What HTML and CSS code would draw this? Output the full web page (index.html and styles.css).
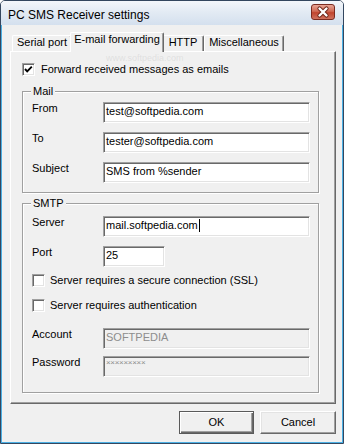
FILE: index.html
```html
<!DOCTYPE html>
<html>
<head>
<meta charset="utf-8">
<link rel="stylesheet" href="styles.css">
</head>
<body>
<div class="window">
  <div class="titlebar">
    <span class="title">PC SMS Receiver settings</span>
    <div class="close">
      <svg width="22" height="14" viewBox="0 0 22 14">
        <path d="M7.5 3.5 L14.5 10.5 M14.5 3.5 L7.5 10.5" stroke="#6b2418" stroke-width="4.2" stroke-linecap="round" fill="none"/>
        <path d="M7.5 3.5 L14.5 10.5 M14.5 3.5 L7.5 10.5" stroke="#ffffff" stroke-width="2.4" stroke-linecap="round" fill="none"/>
      </svg>
    </div>
  </div>
  <div class="frame">
    <div class="tabs">
      <div class="tab t-serial">Serial port</div>
      <div class="tab active">E-mail forwarding</div>
      <div class="tab t-http">HTTP</div>
      <div class="tab t-misc">Miscellaneous</div>
    </div>
    <div class="panel">
      <div class="check-row fwd">
        <span class="cb"><svg width="11" height="11" viewBox="0 0 11 11"><path d="M2 5 L4.2 7.4 L8.8 2.6" stroke="#000" stroke-width="1.9" fill="none"/></svg></span>
        <span>Forward received messages as emails</span>
      </div>
      <div class="group mail">
        <span class="group-title">Mail</span>
        <div class="row"><span class="lbl">From</span><div class="edit">test@softpedia.com</div></div>
        <div class="row"><span class="lbl">To</span><div class="edit">tester@softpedia.com</div></div>
        <div class="row"><span class="lbl">Subject</span><div class="edit">SMS from %sender</div></div>
      </div>
      <div class="group smtp">
        <span class="group-title">SMTP</span>
        <div class="row"><span class="lbl">Server</span><div class="edit">mail.softpedia.com<span class="caret"></span></div></div>
        <div class="row"><span class="lbl">Port</span><div class="edit port">25</div></div>
        <div class="check-row ssl"><span class="cb"></span><span>Server requires a secure connection (SSL)</span></div>
        <div class="check-row auth"><span class="cb"></span><span>Server requires authentication</span></div>
        <div class="row account"><span class="lbl">Account</span><div class="edit disabled">SOFTPEDIA</div></div>
        <div class="row password"><span class="lbl">Password</span><div class="edit disabled pw">×××××××××</div></div>
      </div>
    </div>
    <div class="buttons">
      <div class="btn default ok">OK</div>
      <div class="btn cancel">Cancel</div>
    </div>
  </div>
  <div class="wm wm-url">www.softpedia.com</div>
</div>
</body>
</html>
```
FILE: styles.css
```css
* { box-sizing: border-box; }
body {
  margin: 0;
  font-family: "Liberation Sans", Arial, sans-serif;
  font-size: 11px;
  color: #000;
  background: #fff;
}
.window {
  position: relative;
  width: 344px;
  height: 444px;
  border: 1px solid #34475f;
  border-radius: 5px 5px 0 0;
  background: #f0f0f0;
  display: flex;
  flex-direction: column;
  overflow: hidden;
}
.titlebar {
  flex: none;
  height: 24px;
  display: flex;
  align-items: flex-start;
  background: linear-gradient(#f4f7fb, #e3ebf4 45%, #d4e0ee);
}
.title {
  font-size: 12px;
  line-height: 14px;
  margin: 7px 0 0 7px;
  color: #000;
}
.close {
  margin: 3px 8px 0 auto;
  width: 24px;
  height: 16px;
  border: 1px solid #7b2b20;
  border-radius: 3px;
  background: linear-gradient(#e8a595, #d06a55 45%, #c0442e 55%, #d0725e);
  display: flex;
  align-items: center;
  justify-content: center;
}
.frame {
  flex: 1;
  border: 1px solid #4cb0e4;
  border-top: 0;
  padding: 0 6px 0 8px;
  display: flex;
  flex-direction: column;
}
.tabs {
  flex: none;
  display: flex;
  align-items: flex-end;
  height: 19px;
  margin-top: 7px;
  padding-left: 2px;
}
.tab {
  height: 16px;
  border: 1px solid;
  border-color: #fff #696969 transparent #fff;
  border-bottom: 0;
  border-radius: 2px 2px 0 0;
  box-shadow: inset -1px 0 #a0a0a0;
  text-align: center;
  line-height: 13px;
  padding-top: 0;
  white-space: nowrap;
}
.t-serial { width: 60px; }
.t-http { width: 42px; }
.t-misc { width: 80px; }
.tab.active {
  position: relative;
  z-index: 1;
  width: 94px;
  height: 20px;
  margin: 0 -2px -1px;
  background: #f0f0f0;
}
.panel {
  flex: none;
  height: 353px;
  border: 1px solid;
  border-color: #fff #696969 #696969 #fff;
  box-shadow: inset -1px -1px #a0a0a0;
  padding: 11px 0 0 11px;
}
.check-row {
  display: flex;
  align-items: flex-start;
  height: 13px;
  line-height: 13px;
  white-space: nowrap;
}
.cb {
  flex: none;
  width: 13px;
  height: 13px;
  margin-right: 5px;
  background: #fff;
  border: 1px solid;
  border-color: #a0a0a0 #fff #fff #a0a0a0;
  box-shadow: inset 1px 1px #696969, inset -1px -1px #e3e3e3;
  display: flex;
  align-items: center;
  justify-content: center;
}
.fwd .cb { margin-right: 6px; }
.group {
  position: relative;
  width: 297px;
  border: 1px solid #a0a0a0;
  box-shadow: inset 1px 1px #fff, 1px 1px #fff;
  padding: 0 8px 0 9px;
}
.group-title {
  position: absolute;
  top: -7px;
  left: 8px;
  padding: 0 2px;
  line-height: 13px;
  background: #f0f0f0;
}
.mail { margin-top: 15px; padding-top: 10px; padding-bottom: 9px; }
.smtp { margin-top: 10px; padding-top: 12px; padding-bottom: 15px; }
.row {
  display: flex;
  align-items: flex-start;
  height: 21px;
}
.row + .row { margin-top: 9px; }
.lbl {
  width: 71px;
  flex: none;
  line-height: 13px;
}
.edit {
  width: 207px;
  height: 21px;
  background: #fff;
  border: 1px solid;
  border-color: #a0a0a0 #fff #fff #a0a0a0;
  box-shadow: inset 1px 1px #696969, inset -1px -1px #e3e3e3;
  padding: 2px 2px 0 2px;
  line-height: 13px;
  white-space: nowrap;
  overflow: hidden;
}
.edit.port { width: 62px; }
.edit.disabled { background: #f0f0f0; color: #8d8d8d; }
.edit.pw { font-size: 8px; line-height: 10px; padding-top: 1px; letter-spacing: -0.3px; }
.caret {
  display: inline-block;
  width: 1px;
  height: 13px;
  background: #000;
  vertical-align: -3px;
  margin-left: 1px;
}
.ssl { margin-top: 7px; }
.auth { margin-top: 12px; }
.row.account { margin-top: 16px; }
.row.password { margin-top: 7px; }
.buttons {
  flex: none;
  display: flex;
  justify-content: flex-end;
  gap: 6px;
  margin-top: 7px;
}
.btn {
  height: 23px;
  line-height: 21px;
  text-align: center;
  border: 1px solid;
  border-color: #fff #696969 #696969 #fff;
  box-shadow: inset -1px -1px #a0a0a0, inset 1px 1px #e3e3e3;
}
.ok { width: 75px; }
.cancel { width: 76px; }
.btn.default {
  border-color: #5a5a5a;
  box-shadow: inset 1px 1px #fff, inset -1px -1px #696969, inset -2px -2px #a0a0a0;
}
.wm {
  position: absolute;
  pointer-events: none;
  color: rgba(170, 170, 170, 0.25);
  white-space: nowrap;
}
.wm-url {
  left: 105px;
  top: 52px;
  font-size: 9px;
  line-height: 10px;
}
```
